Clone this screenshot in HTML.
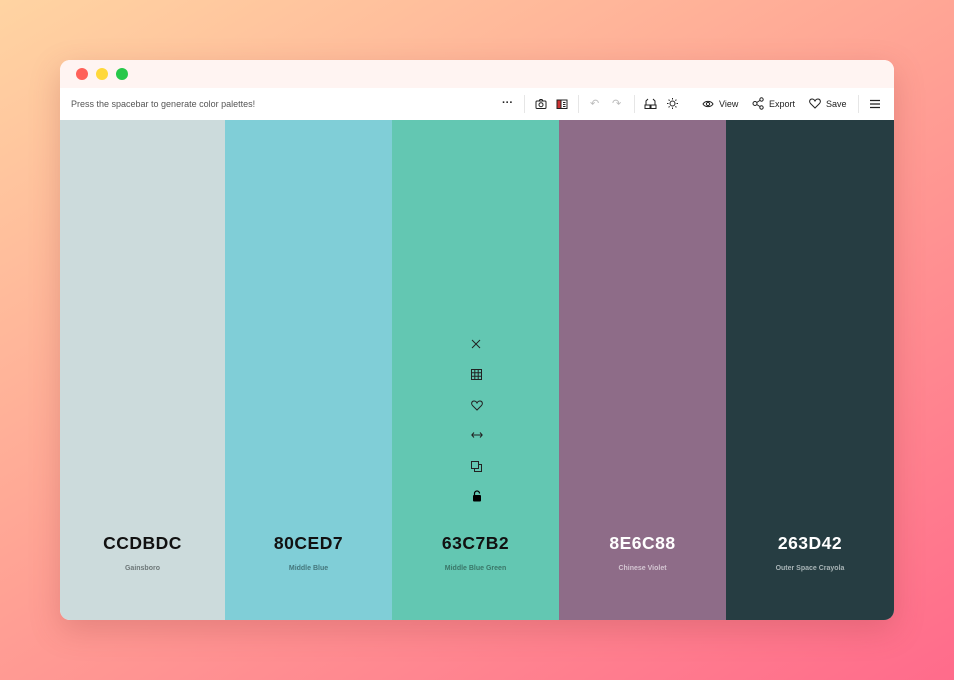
<!DOCTYPE html>
<html><head><meta charset="utf-8"><style>
*{margin:0;padding:0;box-sizing:border-box}
body{width:954px;height:680px;overflow:hidden;background:linear-gradient(150deg,#ffd4a2 0%,#ffa595 45%,#ff6b8b 100%);font-family:"Liberation Sans",sans-serif;position:relative}
.win{position:absolute;left:60px;top:60px;width:834px;height:560px;border-radius:10px;overflow:hidden;box-shadow:0 10px 30px rgba(150,60,60,.25);background:#fff}
.title{height:28px;background:#fff4f2;position:relative}
.dot{position:absolute;top:8px;width:12px;height:12px;border-radius:50%}
.tb{height:32px;background:#fff;position:relative;font-size:9px;color:#333}
.tb .hint{position:absolute;left:11px;top:11px;color:#555;font-size:9px}
.it{position:absolute;top:11px;font-size:9px;color:#222}
.sep{position:absolute;top:7px;width:1px;height:18px;background:#e6e6e6}
.cols{display:flex;height:500px}
.c{position:relative}
.hex{position:absolute;top:413px;width:100%;text-align:center;font-size:17.5px;font-weight:bold;letter-spacing:.5px}
.nm{position:absolute;top:445px;width:100%;text-align:center;font-size:7px;font-weight:bold}
svg{position:absolute}
</style></head><body>
<div class="win">
<div class="title">
<div class="dot" style="left:16px;background:#ff6159"></div>
<div class="dot" style="left:36px;background:#ffd83a"></div>
<div class="dot" style="left:56px;background:#27c84a"></div>
</div>
<div class="tb">
<div class="it" style="left:442px;top:9px;font-weight:bold;font-size:11px">···</div>
<div class="hint">Press the spacebar to generate color palettes!</div>
<div class="sep" style="left:464px"></div>
<svg style="left:475px;top:10px" width="12" height="12" viewBox="0 0 12 12" fill="none" stroke="#222" stroke-width="1"><rect x="1" y="3" width="10" height="7.5" rx="1"/><path d="M4 3l1-1.5h2L8 3"/><circle cx="6" cy="6.7" r="2"/></svg>
<svg style="left:496px;top:10px" width="12" height="12" viewBox="0 0 12 12" fill="none" stroke="#222" stroke-width="1"><rect x="1" y="2" width="10" height="8.5"/><rect x="1" y="2" width="4" height="8.5" fill="#c33" stroke="#222"/><path d="M7 4.5h2.5M7 6.5h2.5M7 8.5h2.5"/></svg>
<div class="sep" style="left:518px"></div>
<div class="it" style="left:530px;color:#bbb;font-size:11px;top:9px">↶</div>
<div class="it" style="left:552px;color:#bbb;font-size:11px;top:9px">↷</div>
<div class="sep" style="left:574px"></div>
<svg style="left:584px;top:10px" width="13" height="12" viewBox="0 0 13 12" fill="none" stroke="#222" stroke-width="1"><path d="M2 7V3l2-2M11 7V3L9 1"/><rect x="1" y="7" width="5" height="3.5"/><rect x="7" y="7" width="5" height="3.5"/></svg>
<svg style="left:606px;top:9px" width="13" height="13" viewBox="0 0 13 13" fill="none" stroke="#222" stroke-width="1"><circle cx="6.5" cy="6.5" r="2.5"/><path d="M6.5 1v1.5M6.5 10.5V12M1 6.5h1.5M10.5 6.5H12M2.6 2.6l1 1M9.4 9.4l1 1M2.6 10.4l1-1M9.4 3.6l1-1"/></svg>
<svg style="left:642px;top:11px" width="12" height="10" viewBox="0 0 12 10" fill="none" stroke="#222" stroke-width="1"><path d="M1 5C3 1.5 9 1.5 11 5C9 8.5 3 8.5 1 5Z"/><circle cx="6" cy="5" r="1.6"/></svg>
<div class="it" style="left:659px">View</div>
<svg style="left:692px;top:9px" width="12" height="13" viewBox="0 0 12 13" fill="none" stroke="#222" stroke-width="1"><circle cx="3" cy="6.5" r="2"/><circle cx="9.5" cy="2.5" r="1.7"/><circle cx="9.5" cy="10.5" r="1.7"/><path d="M4.7 5.5l3.2-2M4.7 7.5l3.2 2"/></svg>
<div class="it" style="left:709px">Export</div>
<svg style="left:749px;top:10px" width="12" height="11" viewBox="0 0 12 11" fill="none" stroke="#222" stroke-width="1"><path d="M6 10L1.5 5.5C0 4 .5 1 3 1c1.5 0 2.5 1 3 2 .5-1 1.5-2 3-2 2.5 0 3 3 1.5 4.5Z"/></svg>
<div class="it" style="left:766px">Save</div>
<div class="sep" style="left:798px"></div>
<svg style="left:810px;top:11px" width="10" height="10" viewBox="0 0 10 10" stroke="#222" stroke-width="1.2"><path d="M0 1.5h10M0 5h10M0 8.5h10"/></svg>
</div>
<div class="cols">
<div class="c" style="width:165px;background:#ccdbdc"><div class="hex" style="color:#111">CCDBDC</div><div class="nm" style="color:#6d7778">Gainsboro</div></div>
<div class="c" style="width:167px;background:#80ced7"><div class="hex" style="color:#111">80CED7</div><div class="nm" style="color:#44767c">Middle Blue</div></div>
<div class="c" style="width:167px;background:#63c7b2"><div class="hex" style="color:#111">63C7B2</div><div class="nm" style="color:#3a7668">Middle Blue Green</div>
<svg style="left:79px;top:219px" width="10" height="10" viewBox="0 0 10 10" stroke="#222" stroke-width="1"><path d="M1 1l8 8M9 1L1 9"/></svg>
<svg style="left:79px;top:249px" width="11" height="11" viewBox="0 0 11 11" fill="none" stroke="#222" stroke-width="1"><rect x=".5" y=".5" width="10" height="10"/><path d="M.5 3.8h10M.5 7.2h10M3.8.5v10M7.2.5v10"/></svg>
<svg style="left:79px;top:280px" width="12" height="11" viewBox="0 0 12 11" fill="none" stroke="#222" stroke-width="1"><path d="M6 10L1.5 5.5C0 4 .5 1 3 1c1.5 0 2.5 1 3 2 .5-1 1.5-2 3-2 2.5 0 3 3 1.5 4.5Z"/></svg>
<svg style="left:79px;top:311px" width="12" height="8" viewBox="0 0 12 8" fill="none" stroke="#222" stroke-width="1"><path d="M1 4h10M3 1.5L.8 4 3 6.5M9 1.5L11.2 4 9 6.5"/></svg>
<svg style="left:79px;top:341px" width="11" height="11" viewBox="0 0 11 11" fill="none" stroke="#222" stroke-width="1"><rect x=".5" y=".5" width="7" height="7"/><path d="M7.5 3.5h3v7h-7v-3"/></svg>
<svg style="left:80px;top:370px" width="10" height="12" viewBox="0 0 10 12"><path d="M2.5 5V3.5a2.5 2.5 0 0 1 5 0" fill="none" stroke="#000" stroke-width="1.2"/><rect x="1" y="5" width="8" height="6.5" rx="1" fill="#000"/></svg>
</div>
<div class="c" style="width:167px;background:#8e6c88"><div class="hex" style="color:#fff">8E6C88</div><div class="nm" style="color:#d4c6d2">Chinese Violet</div></div>
<div class="c" style="width:168px;background:#263d42"><div class="hex" style="color:#fff">263D42</div><div class="nm" style="color:#a8b4b6">Outer Space Crayola</div></div>
</div>
</div>
</body></html>
